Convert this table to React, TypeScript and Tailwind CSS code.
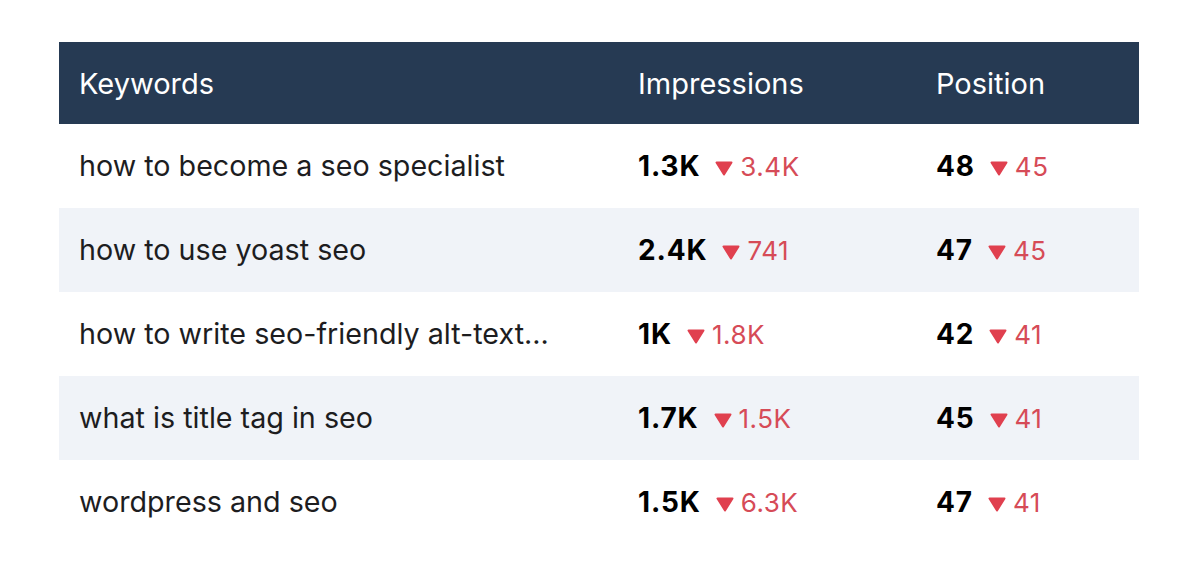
import React from "react";

interface Row {
    keyword: string;
    impressions: string;
    impressionsPrev: string;
    position: string;
    positionPrev: string;
}

const rows: Row[] = [
    { keyword: "how to become a seo specialist", impressions: "1.3K", impressionsPrev: "3.4K", position: "48", positionPrev: "45" },
    { keyword: "how to use yoast seo", impressions: "2.4K", impressionsPrev: "741", position: "47", positionPrev: "45" },
    { keyword: "how to write seo-friendly alt-text...", impressions: "1K", impressionsPrev: "1.8K", position: "42", positionPrev: "41" },
    { keyword: "what is title tag in seo", impressions: "1.7K", impressionsPrev: "1.5K", position: "45", positionPrev: "41" },
    { keyword: "wordpress and seo", impressions: "1.5K", impressionsPrev: "6.3K", position: "47", positionPrev: "41" },
];

// bold current value, red arrow, previous value
const Delta: React.FC<{ value: string; prev: string }> = ({ value, prev }) => (
    <div className="flex items-baseline">
        <span className="font-bold text-black text-[28px] tracking-[0.03em]">{value}</span>
        <svg width="18" height="15" viewBox="0 0 18 15" className="ml-[15px] mr-[7px] mb-[1px]">
            <path d="M1.5 1.5 H16.5 L9 13.5 Z" fill="#e0404f" stroke="#e0404f" strokeWidth="2" strokeLinejoin="round" />
        </svg>
        <span className="text-[#d64b57] text-[26px] tracking-[0.02em]">{prev}</span>
    </div>
);

export default function App() {
    return (
        <div className="min-h-screen bg-white pt-[42px] px-[59px]" style={{ fontFamily: "Inter, 'Noto Sans', sans-serif" }}>
            <div className="w-[1080px]">
                <div className="flex items-center h-[82px] pt-[2px] bg-[#263a53] text-white text-[29px]">
                    <div className="w-[579px] pl-[20px]">Keywords</div>
                    <div className="w-[298px]">Impressions</div>
                    <div className="flex-1">Position</div>
                </div>
                {rows.map((r, i) => (
                    <div key={r.keyword} className={`flex items-center h-[84px] ${i % 2 === 1 ? "bg-[#f0f3f8]" : "bg-white"}`}>
                        <div className="w-[579px] pl-[20px] text-[28.7px] text-[#1d1d1f]">{r.keyword}</div>
                        <div className="w-[298px]">
                            <Delta value={r.impressions} prev={r.impressionsPrev} />
                        </div>
                        <div className="flex-1">
                            <Delta value={r.position} prev={r.positionPrev} />
                        </div>
                    </div>
                ))}
            </div>
        </div>
    );
}
